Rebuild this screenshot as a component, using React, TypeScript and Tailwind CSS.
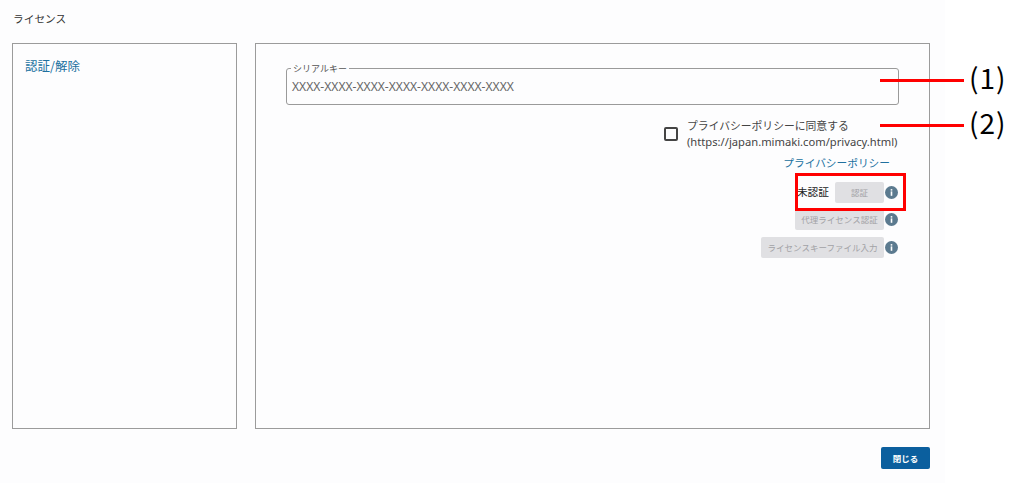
import React from 'react';

const font = "font-['Noto_Sans_CJK_JP','Noto_Sans',sans-serif]";

const InfoIcon = () => (
  <svg width="13" height="13" viewBox="0 0 13 13" className="shrink-0">
    <circle cx="6.5" cy="6.5" r="6.5" fill="#5b7a8f" />
    <rect x="5.7" y="5.4" width="1.6" height="4.4" fill="#fff" />
    <rect x="5.7" y="3.1" width="1.6" height="1.5" fill="#fff" />
  </svg>
);

const GrayButton = ({ label, width }: { label: string; width: string }) => (
  <button className={`h-[21px] ${width} bg-[#e0e0e3] rounded-[2px] text-[8.5px] text-[#a2a2a6] flex items-center justify-center whitespace-nowrap`}>
    {label}
  </button>
);

const App = () => {
  return (
    <div className={`relative w-[1024px] h-[483px] overflow-hidden bg-white ${font}`}>
      <div className="w-[945px] h-[483px] bg-[#fdfdfe] pl-3 flex flex-col">
        <div className="h-[43px] pt-[11px] text-[10.7px] leading-[15px] text-[#333] pl-px">ライセンス</div>
        <div className="flex gap-[18px] h-[386px] w-[918px]">
          <div className="w-[225px] border border-[#9b9b9b] pl-3 pt-[13px]">
            <a className="block text-[12.5px] leading-[18px] text-[#20709f]">認証/解除</a>
          </div>
          <div className="w-[675px] border border-[#9b9b9b] pl-[30px] pr-[30px] pt-[19px] flex flex-col">
            <fieldset className="h-[42px] border border-[#9a9a9a] rounded-[3px] pl-[5px] pr-2">
              <legend className="text-[9px] leading-[11px] text-[#555] px-[2px] -ml-px">シリアルキー</legend>
              <div className="text-[12.1px] leading-[18px] text-[#666] mt-[4px] font-['Noto_Sans',sans-serif]">XXXX-XXXX-XXXX-XXXX-XXXX-XXXX-XXXX</div>
            </fieldset>
            <div className="flex justify-end items-center mt-[12px]">
              <div className="w-[14px] h-[14px] border-2 border-[#444] rounded-[2px] mr-[9px]"></div>
              <div className="text-[10.8px] leading-[16px] text-[#444] w-[212px]">
                <div>プライバシーポリシーに同意する</div>
                <div className="text-[11.2px] leading-[17px] font-['Noto_Sans',sans-serif] whitespace-nowrap">(https://japan.mimaki.com/privacy.html)</div>
              </div>
            </div>
            <div className="flex justify-end pr-[9px] mt-[5px] text-[10.7px] leading-[16px] text-[#20709f]">プライバシーポリシー</div>
            <div className="flex justify-end items-center gap-px mr-px mt-[11px]">
              <span className="text-[10.7px] text-[#222] mr-[5px]">未認証</span>
              <GrayButton label="認証" width="w-[49px]" />
              <InfoIcon />
            </div>
            <div className="flex justify-end items-center gap-px mr-px mt-[6px]">
              <GrayButton label="代理ライセンス認証" width="w-[89px]" />
              <InfoIcon />
            </div>
            <div className="flex justify-end items-center gap-px mr-px mt-[7px]">
              <GrayButton label="ライセンスキーファイル入力" width="w-[123px]" />
              <InfoIcon />
            </div>
          </div>
        </div>
        <div className="w-[918px] flex justify-end mt-[18px]">
          <button className="w-[49px] h-[22px] bg-[#0b5f9e] rounded-[2px] text-white text-[8.5px] font-bold">閉じる</button>
        </div>
      </div>

      {/* annotations over the screenshot */}
      <div className="absolute left-[795px] top-[173px] w-[111px] h-[38px] border-[3px] border-[#ff0000]"></div>
      <div className="absolute left-[880px] top-[79px] w-[84px] h-[3px] bg-[#ff0000]"></div>
      <div className="absolute left-[880px] top-[124px] w-[84px] h-[3px] bg-[#ff0000]"></div>
      <div className="absolute left-[969px] top-[57px] text-[28px] leading-[40px] tracking-[1px] text-black whitespace-nowrap">(1)</div>
      <div className="absolute left-[969px] top-[102px] text-[28px] leading-[40px] tracking-[1px] text-black whitespace-nowrap">(2)</div>
    </div>
  );
};

export default App;
